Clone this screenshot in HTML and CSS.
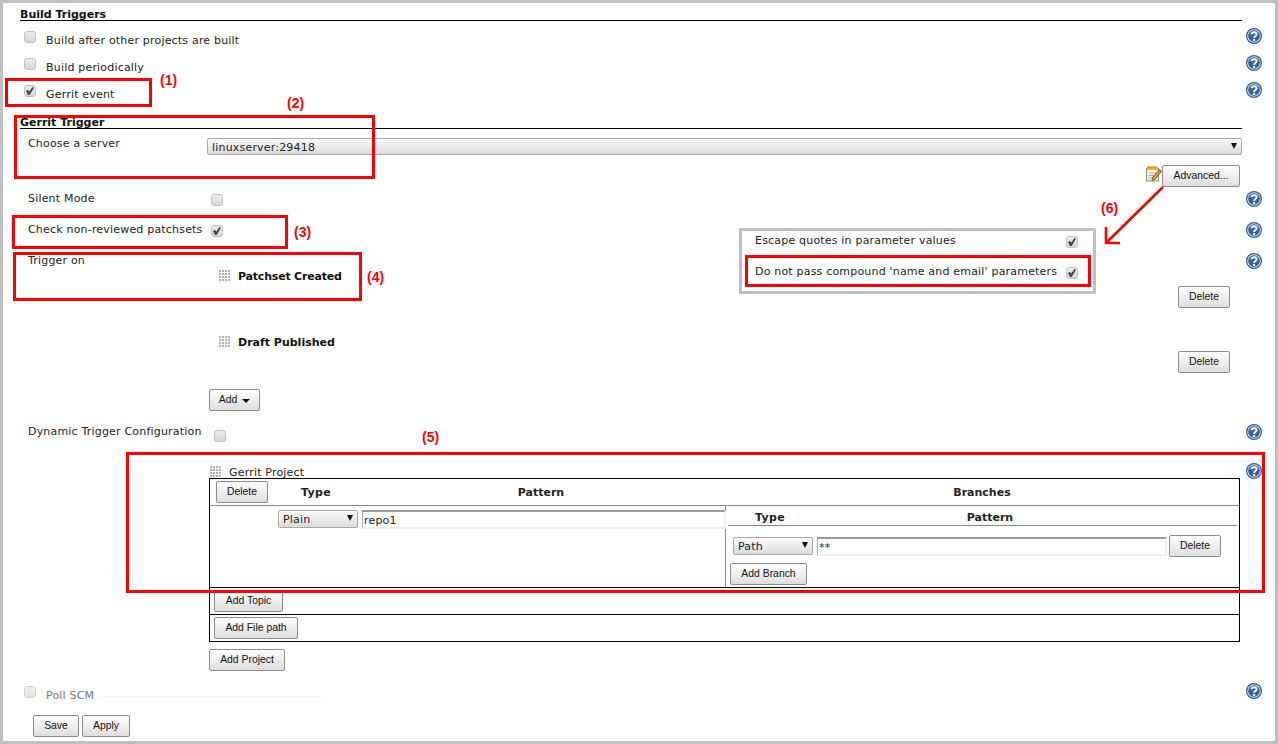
FILE: index.html
```html
<!DOCTYPE html>
<html lang="en">
<head>
<meta charset="utf-8">
<title>Build Triggers</title>
<link rel="stylesheet" href="styles.css">
</head>
<body>
<svg class="defs" aria-hidden="true">
  <symbol id="help" viewBox="0 0 16 16">
    <circle cx="8" cy="8" r="8" fill="#2f5c9e"/>
    <circle cx="8" cy="8" r="6.800" fill="#cfdcee"/>
    <circle cx="8" cy="8" r="5.800" fill="#33629f"/>
    <path d="M5.500 6.300C5.700 3.500 10.600 3.500 10.600 6.300C10.600 8 8.100 8 8.100 10" fill="none" stroke="#fff" stroke-width="1.900"/>
    <rect x="7.100" y="11" width="2" height="2" fill="#fff"/>
  </symbol>
  <symbol id="note" viewBox="0 0 16 16">
    <rect x="0.500" y="2.500" width="12" height="12.500" fill="#f4f1e2" stroke="#8d8d7c"/>
    <rect x="1" y="0.500" width="11" height="3.500" fill="#f0bd2c"/>
    <path d="M2 0.500v2M4 0.500v2M6 0.500v2M8 0.500v2M10 0.500v2" stroke="#a87a10"/>
    <path d="M3 7h6M3 9.500h5M3 12h4" stroke="#a9a99a"/>
    <path d="M6.500 11.500L13.500 3.500L15.500 5.200L8.800 13.500L6 14.500Z" fill="#e0962c" stroke="#5c4020" stroke-width="0.800"/>
  </symbol>
</svg>

<div class="page">
  <form class="form">
    <h2 class="section">Build Triggers</h2>
    <div class="line check-row"><div class="opt"><input class="cb" type="checkbox"><span class="opt-label">Build after other projects are built</span></div><svg class="help"><use href="#help"/></svg></div>
    <div class="line check-row"><div class="opt"><input class="cb" type="checkbox"><span class="opt-label">Build periodically</span></div><svg class="help"><use href="#help"/></svg></div>
    <div class="line check-row"><div class="opt"><input class="cb" type="checkbox" checked><span class="opt-label">Gerrit event</span></div><svg class="help"><use href="#help"/></svg></div>

    <h2 class="section section-sub">Gerrit Trigger</h2>
    <div class="field server-row">
      <span class="lbl">Choose a server</span>
      <span class="sel sel-server"><select><option>linuxserver:29418</option></select></span>
    </div>
    <div class="advanced-row">
      <svg class="note"><use href="#note"/></svg>
      <button type="button" class="btn btn-advanced">Advanced...</button>
    </div>
    <div class="line setting-row">
      <div class="field"><span class="lbl">Silent Mode</span><input class="cb cb-field" type="checkbox"></div>
      <svg class="help help-setting"><use href="#help"/></svg>
    </div>
    <div class="line setting-row">
      <div class="field"><span class="lbl">Check non-reviewed patchsets</span><input class="cb cb-field" type="checkbox" checked></div>
      <svg class="help help-setting"><use href="#help"/></svg>
    </div>
    <div class="line">
      <div class="field">
        <span class="lbl lbl-trigger">Trigger on</span>
        <div class="events">
          <div class="event">
            <span class="grip"></span><b class="event-name event-name-tight">Patchset Created</b>
            <button type="button" class="btn btn-delete event-del">Delete</button>
          </div>
          <div class="event">
            <span class="grip"></span><b class="event-name">Draft Published</b>
            <button type="button" class="btn btn-delete event-del event-del-2">Delete</button>
          </div>
          <button type="button" class="btn btn-add">Add <i class="caret"></i></button>
        </div>
      </div>
      <svg class="help help-setting"><use href="#help"/></svg>
    </div>
    <div class="line dynamic-row">
      <div class="field"><span class="lbl lbl-dynamic">Dynamic Trigger Configuration</span><input class="cb cb-dynamic" type="checkbox"></div>
      <svg class="help help-dynamic"><use href="#help"/></svg>
    </div>
    <div class="line project-title">
      <div class="project-name"><span class="grip"></span><span>Gerrit Project</span></div>
      <svg class="help help-project"><use href="#help"/></svg>
    </div>
    <div class="project">
      <div class="project-head">
        <button type="button" class="btn btn-delete">Delete</button>
        <b class="h-type">Type</b>
        <b class="h-pattern">Pattern</b>
        <b class="h-branches">Branches</b>
      </div>
      <div class="project-body">
        <div class="repo">
          <span class="sel sel-type"><select><option>Plain</option></select></span>
          <input class="txt txt-repo" type="text" value="repo1">
        </div>
        <div class="branches">
          <div class="branch-head"><b class="bh-type">Type</b><b class="bh-pattern">Pattern</b></div>
          <div class="branch-row">
            <span class="sel sel-type"><select><option>Path</option></select></span>
            <input class="txt txt-branch" type="text" value="**">
            <button type="button" class="btn btn-delete btn-branch-del">Delete</button>
          </div>
          <button type="button" class="btn btn-add-branch">Add Branch</button>
        </div>
      </div>
      <div class="project-foot"><button type="button" class="btn btn-topic">Add Topic</button></div>
      <div class="project-foot project-foot-last"><button type="button" class="btn btn-file">Add File path</button></div>
    </div>
    <button type="button" class="btn btn-project">Add Project</button>
    <div class="line poll-row">
      <div class="opt"><input class="cb cb-poll" type="checkbox"><span class="opt-label poll-label">Poll SCM</span><span class="poll-dots"></span></div>
      <svg class="help help-poll"><use href="#help"/></svg>
    </div>
    <div class="actions">
      <button type="button" class="btn btn-save">Save</button>
      <button type="button" class="btn btn-apply">Apply</button>
    </div>
  </form>

  <div class="adv-panel">
    <div class="adv-row"><span class="adv-text">Escape quotes in parameter values</span><input class="cb adv-cb" type="checkbox" checked></div>
    <div class="adv-row"><span class="adv-text">Do not pass compound 'name and email' parameters</span><input class="cb adv-cb" type="checkbox" checked></div>
  </div>

  <div class="mark mark-1"></div>
  <div class="mark mark-2"></div>
  <div class="mark mark-3"></div>
  <div class="mark mark-4"></div>
  <div class="mark mark-5"></div>
  <div class="mark mark-6"></div>
  <span class="tag tag-1">(1)</span>
  <span class="tag tag-2">(2)</span>
  <span class="tag tag-3">(3)</span>
  <span class="tag tag-4">(4)</span>
  <span class="tag tag-5">(5)</span>
  <span class="tag tag-6">(6)</span>
  <svg class="arrow" viewBox="0 0 70 65"><path d="M63 2L6 58M6 42V58H20" fill="none" stroke="#f00" stroke-width="2.600"/></svg>
</div>
</body>
</html>
```
FILE: styles.css
```css
* { box-sizing: border-box; }
html, body { margin: 0; padding: 0; background: #fff; overflow: hidden; }
body, input, select { font: 11px/13px "DejaVu Sans", Verdana, sans-serif; letter-spacing: 0.19px; color: #222; }
b, .section { letter-spacing: 0; }
.defs { display: none; }

.page {
  position: relative;
  width: 1278px;
  height: 744px;
  padding: 3px;
  box-shadow: inset 0 0 0 3px #c0c0c0;
  overflow: hidden;
}
.form { padding-left: 17px; }

.section {
  width: 1222px;
  height: 18px;
  margin: 0;
  padding-top: 5px;
  font-size: 11px;
  line-height: 13px;
  font-weight: bold;
  color: #111;
  border-bottom: 1px solid #000;
}
.section-sub { height: 27px; padding-top: 14px; }

.line { display: grid; grid-template-columns: 1222px 16px; column-gap: 4px; align-items: start; }
.help { display: block; width: 16px; height: 16px; }
.check-row { height: 27px; }
.check-row .help { margin-top: 7px; }

.opt { display: flex; align-items: flex-start; padding-left: 4px; }
.opt-label { margin: 13px 0 0 10px; }

.cb {
  appearance: none;
  position: relative;
  display: block;
  flex: none;
  width: 12px;
  height: 12px;
  margin: 10px 0 0;
  border: 1px solid #c0c0c0;
  border-radius: 3px;
  background: linear-gradient(#ededed, #d6d6d6);
}
.cb:checked::after {
  content: "";
  position: absolute;
  left: 1px;
  top: 1px;
  width: 8px;
  height: 8px;
  background: #444;
  clip-path: polygon(0 50%, 25% 35%, 40% 60%, 80% 0, 100% 10%, 45% 100%, 25% 100%);
}

.field { display: flex; align-items: flex-start; padding-left: 8px; }
.lbl { flex: none; width: 179px; margin-top: 5px; }
.server-row { height: 36px; }
.server-row .lbl { margin-top: 8px; }

.sel { position: relative; display: block; flex: none; }
.sel select {
  appearance: none;
  display: block;
  width: 100%;
  height: 100%;
  padding: 0 0 0 4px;
  border: 1px solid #a8a8a8;
  border-radius: 2px;
  background: linear-gradient(#fafafa, #dcdcdc);
  color: #222;
}
.sel::after {
  content: "";
  position: absolute;
  right: 5px;
  top: 5px;
  border-style: solid;
  border-width: 6px 3.500px 0;
  border-color: #111 transparent transparent;
}
.sel-server { width: 1035px; height: 17px; margin-top: 9px; }
.sel-server select { padding-top: 2px; }
.sel-type { width: 80px; height: 18px; }

.advanced-row { display: flex; justify-content: flex-end; width: 1220px; height: 22px; }
.note { width: 16px; height: 16px; margin-top: 1px; }

.btn {
  display: block;
  flex: none;
  height: 22px;
  padding: 0;
  border: 1px solid #8c8c8c;
  border-radius: 2px;
  background: linear-gradient(#fff, #dedede);
  font: 10.400px/18px "Liberation Sans", Arial, sans-serif;
  letter-spacing: 0;
  color: #111;
}
.btn-advanced { width: 78px; }
.btn-delete { width: 52px; }

.setting-row { height: 31px; }
.help-setting { margin-top: 4px; }
.cb-field { margin: 7px 0 0 4px; }

.events { flex: none; width: 1023px; }
.event { display: flex; align-items: flex-start; height: 66px; padding-left: 12px; }
.grip {
  display: block;
  flex: none;
  width: 11px;
  height: 11px;
  margin-top: 21px;
  background: radial-gradient(circle at 1px 1px, #b0b0b0 1px, transparent 1.200px) 0 0 / 3px 3px;
}
.event-name { margin: 21px 0 0 8px; color: #111; }
.event-name-tight { letter-spacing: -0.2px; }
.event-del { margin: 37px 0 0 auto; }
.event-del-2 { margin-top: 36px; }
.btn-add { width: 51px; margin: 8px 0 0 2px; }
.caret {
  display: inline-block;
  margin-left: 2px;
  vertical-align: 0;
  border-style: solid;
  border-width: 4px 4px 0;
  border-color: #111 transparent transparent;
}

.dynamic-row { height: 51px; }
.lbl-dynamic { margin-top: 14px; }
.cb-dynamic { margin: 19px 0 0 7px; }
.help-dynamic { margin-top: 13px; }

.project-title { height: 16px; }
.project-name { display: flex; align-items: flex-start; padding-left: 190px; }
.project-name .grip { margin: 4px 8px 0 0; }
.project-name span:last-child { margin-top: 4px; }
.help-project { margin-top: 1px; }

.project { width: 1031px; height: 164px; margin-left: 189px; border: 1px solid #000; }
.project-head { display: flex; height: 27px; border-bottom: 1px solid #888; }
.project-head .btn { margin: 2px 0 0 6px; }
.project-head b { flex: none; margin-top: 7px; }
.h-type { width: 30px; margin-left: 33px; letter-spacing: 0.3px; }
.h-pattern { width: 420px; text-align: center; }
.h-branches { width: 462px; text-align: center; }

.project-body { display: flex; height: 82px; border-bottom: 1px solid #000; }
.repo { display: flex; align-items: flex-start; width: 516px; padding: 4px 0 0 68px; border-right: 1px solid #888; }
.txt {
  display: block;
  flex: none;
  height: 19px;
  padding: 1px 0 0 1px;
  border-style: solid;
  border-width: 2px 2px 2px 1px;
  border-color: #999 #eee #eee #aaa;
  background: #fff;
  color: #222;
}
.txt-repo { width: 364px; margin-left: 4px; }
.branches { flex: 1; padding: 0 2px; }
.branch-head { display: flex; height: 20px; border-bottom: 1px solid #888; }
.branch-head b { flex: none; margin-top: 5px; }
.bh-type { width: 30px; margin-left: 27px; letter-spacing: 0.3px; }
.bh-pattern { width: 410px; text-align: center; }
.branch-row { display: flex; align-items: flex-start; padding: 11px 0 0 5px; }
.txt-branch { width: 350px; margin-left: 4px; }
.btn-branch-del { margin: -2px 0 0 2px; }
.btn-add-branch { width: 77px; margin: 6px 0 0 2px; }

.project-foot { height: 27px; padding: 2px 0 0 4px; border-bottom: 1px solid #000; }
.project-foot-last { height: 26px; border-bottom: 0; }
.btn-topic { width: 69px; }
.btn-file { width: 84px; }
.btn-project { width: 76px; margin: 7px 0 0 189px; }

.poll-row { height: 44px; }
.cb-poll { margin-top: 15px; opacity: 0.7; }
.poll-label { margin-top: 18px; color: #777; }
.poll-dots { flex: none; width: 225px; margin: 25px 0 0 4px; border-top: 1px dotted #f0f0f0; }
.help-poll { margin-top: 12px; }

.actions { display: flex; gap: 3px; padding-left: 13px; }
.btn-save { width: 46px; }
.btn-apply { width: 48px; }

.adv-panel {
  position: absolute;
  left: 739px;
  top: 228px;
  width: 357px;
  height: 66px;
  border: 3px solid #c0c0c0;
  background: #fff;
  padding-left: 13px;
}
.adv-row { display: flex; align-items: flex-start; height: 31px; }
.adv-text { flex: none; width: 311px; margin-top: 3px; }
.adv-cb { margin-top: 5px; }

.mark { position: absolute; border: 3px solid #f00; }
.mark-1 { left: 5px; top: 78px; width: 147px; height: 29px; }
.mark-2 { left: 14px; top: 115px; width: 361px; height: 64px; }
.mark-3 { left: 12px; top: 215px; width: 276px; height: 34px; }
.mark-4 { left: 13px; top: 252px; width: 349px; height: 49px; }
.mark-5 { left: 126px; top: 452px; width: 1139px; height: 141px; }
.mark-6 { left: 745px; top: 255px; width: 346px; height: 32px; }

.tag {
  position: absolute;
  font: bold 14px/14px "Liberation Sans", Arial, sans-serif;
  letter-spacing: 0;
  color: #f00;
}
.tag-1 { left: 160px; top: 73px; }
.tag-2 { left: 287px; top: 96px; }
.tag-3 { left: 294px; top: 225px; }
.tag-4 { left: 367px; top: 270px; }
.tag-5 { left: 422px; top: 430px; }
.tag-6 { left: 1101px; top: 201px; }
.arrow { position: absolute; left: 1100px; top: 185px; width: 70px; height: 65px; }
```
